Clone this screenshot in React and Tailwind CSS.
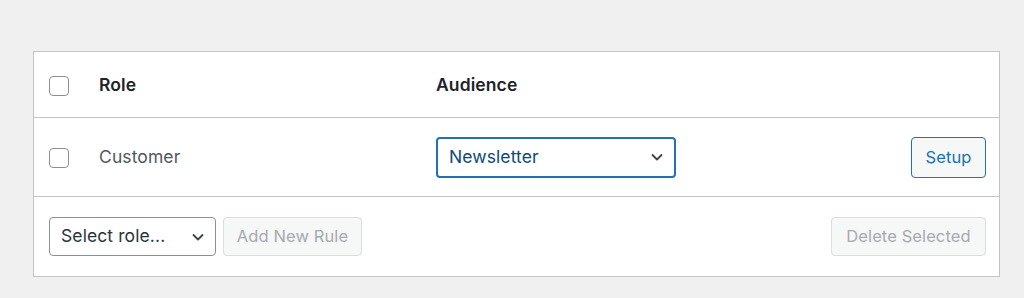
const Checkbox = () => (
  <span className="block w-[20px] h-[20px] rounded-[4px] border border-[#8c8f94] bg-white"></span>
);

const Chevron = ({ className }) => (
  <svg className={className} width="16" height="16" viewBox="0 0 16 16" fill="none">
    <path d="M3.5 6L8 10.5L12.5 6" stroke="currentColor" strokeWidth="1.8" strokeLinecap="round" strokeLinejoin="round" />
  </svg>
);

const App = () => {
  return (
    <div className="min-h-[298px] bg-[#f0f0f1] pt-[51px] pl-[33px] pr-[24px] font-['Inter',sans-serif] text-[17.5px] tracking-[0.1px]">
      <div className="w-[967px] border border-[#c3c4c7] bg-white">
        {/* Header */}
        <div className="flex items-center h-[66px] pt-[2px] border-b border-[#c3c4c7]">
          <div className="w-[65px] pl-[15px] flex items-center">
            <Checkbox />
          </div>
          <div className="w-[337px] font-semibold text-[#1d2327]">Role</div>
          <div className="font-semibold text-[#1d2327]">Audience</div>
        </div>

        {/* Row */}
        <div className="flex items-center h-[79px] border-b border-[#c3c4c7]">
          <div className="w-[65px] pl-[15px] pt-[1px] flex items-center">
            <Checkbox />
          </div>
          <div className="w-[337px] pt-[1px] text-[#50575e]">Customer</div>
          <div className="flex-1 flex items-center justify-between pr-[13px]">
            <div className="w-[240px] h-[41px] rounded-[4px] border-2 border-[#2271b1] flex items-center justify-between pl-[11px] pr-[9px] text-[#0a4b78]">
              <span>Newsletter</span>
              <Chevron className="text-[#3c434a]" />
            </div>
            <button className="h-[41px] w-[75px] rounded-[4px] border border-[#2271b1] bg-[#f6f7f7] text-[#2271b1] text-[16.5px]">
              Setup
            </button>
          </div>
        </div>

        {/* Footer */}
        <div className="flex items-center justify-between h-[79px] pl-[15px] pr-[13px]">
          <div className="flex items-center gap-[7px]">
            <div className="w-[167px] h-[39px] rounded-[4px] border border-[#8c8f94] flex items-center justify-between pl-[11px] pr-[9px] text-[#2c3338]">
              <span>Select role...</span>
              <Chevron className="text-[#3c434a]" />
            </div>
            <button className="h-[39px] w-[139px] rounded-[4px] border border-[#dcdcde] bg-[#f6f7f7] text-[#a7aaad] text-[16.5px]">
              Add New Rule
            </button>
          </div>
          <button className="h-[39px] w-[155px] rounded-[4px] border border-[#dcdcde] bg-[#f6f7f7] text-[#a7aaad] text-[16.5px]">
            Delete Selected
          </button>
        </div>
      </div>
    </div>
  );
};

export default App;
